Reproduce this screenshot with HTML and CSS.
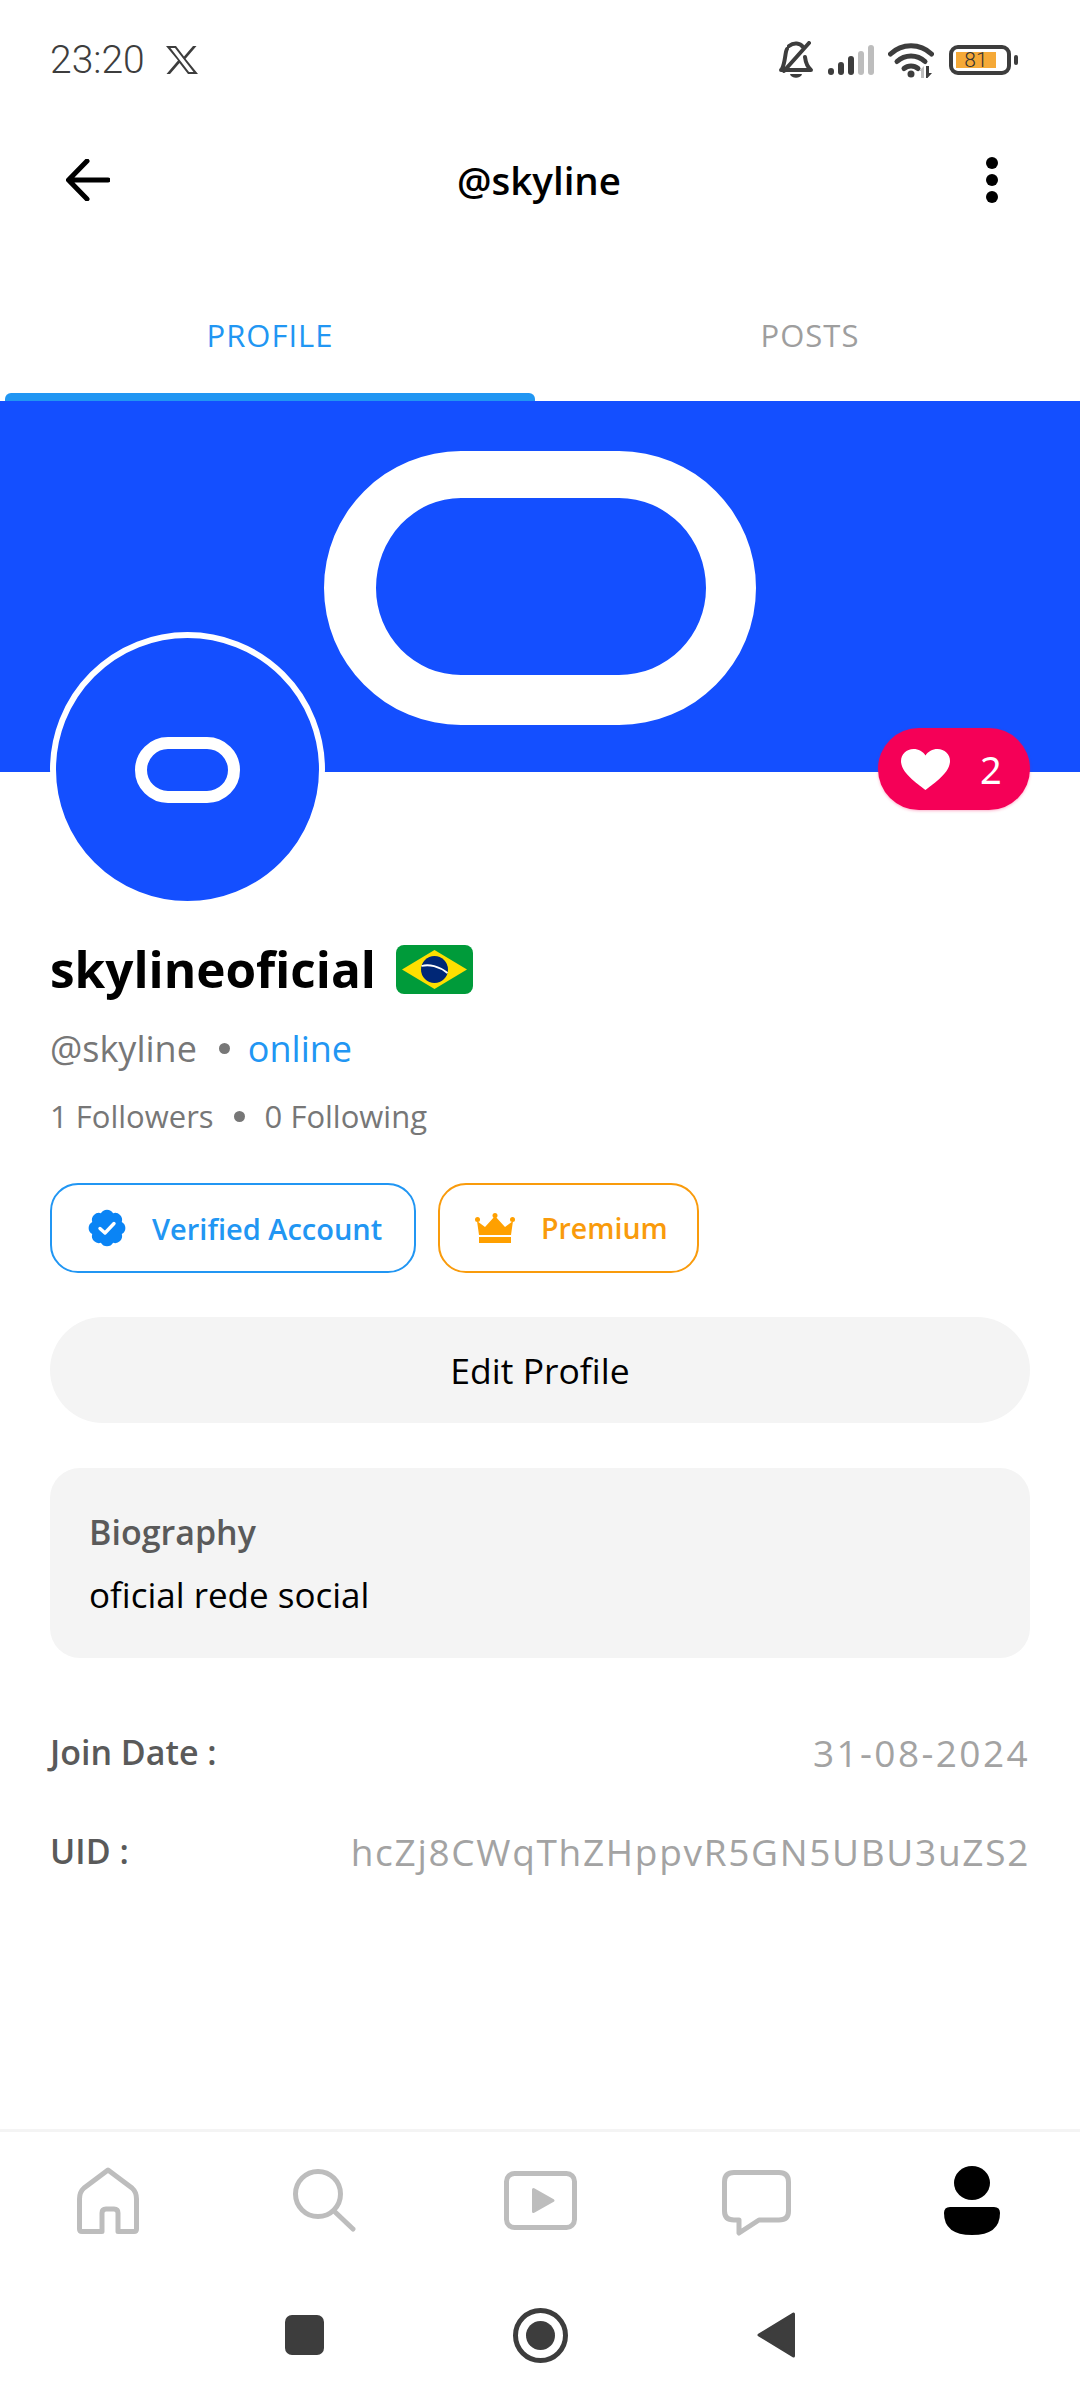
FILE: index.html
```html
<!DOCTYPE html>
<html lang="en">
<head>
<meta charset="utf-8">
<title>@skyline</title>
<link rel="stylesheet" href="styles.css">
</head>
<body>
<div class="screen">
  <div class="status">
    <div class="status-left">
      <span class="clock">23:20</span>
      <svg class="x-logo" viewBox="0 0 32 28"><path fill="#3d3d3d" fill-rule="evenodd" d="M0 0H10L18 10.500 27 0H30.500L19.600 12.800 32 28H22L13.500 17 4 28H.5L12 14.500ZM4.500 2 23 26H27.500L9 2Z"/></svg>
    </div>
    <div class="status-right">
      <svg class="i-bell" viewBox="0 0 34 38"><path fill="none" stroke="#3d3d3d" stroke-width="4" stroke-linecap="round" stroke-linejoin="round" d="M2 29H32C27 25 26.500 20 26 16 M8 8C6 11 6.500 21 3 28 M10 5C15 1 21 2 24 6 M30 2 5 30"/><path fill="#3d3d3d" d="M11 33H23C22 38 12 38 11 33Z"/></svg>
      <svg class="i-signal" viewBox="0 0 46 30"><rect x="0" y="23" width="6" height="7" rx="3" fill="#3d3d3d"/><rect x="10" y="17" width="6" height="13" rx="3" fill="#3d3d3d"/><rect x="20" y="11" width="6" height="19" rx="3" fill="#3d3d3d"/><rect x="30" y="6" width="6" height="24" rx="3" fill="#bdbdbd"/><rect x="40" y="0" width="6" height="30" rx="3" fill="#bdbdbd"/></svg>
      <svg class="i-wifi" viewBox="0 0 46 35"><g fill="none" stroke="#3d3d3d" stroke-width="5" stroke-linecap="round"><path d="M2.500 11C14 0 32 0 43.500 11"/><path d="M9 18.500C17 11 29 11 37 18.500"/><path d="M16 25.500C20 22 26 22 30 25.500"/></g><circle cx="23" cy="31" r="3.500" fill="#3d3d3d"/><path fill="#bdbdbd" d="M31 28 36 23V35H33V28Z"/><path fill="#3d3d3d" d="M38 23H41V30H44L39.500 35 38 35Z"/></svg>
      <div class="battery"><div class="battery-body"><span class="battery-fill">81</span></div><span class="battery-nub"></span></div>
    </div>
  </div>

  <header class="appbar">
    <svg class="i-back" viewBox="0 0 44 42"><path fill="none" stroke="#000" stroke-width="5" stroke-linecap="round" stroke-linejoin="round" d="M42 21H3M21 2 2.500 21 21 40"/></svg>
    <h1 class="appbar-title">@skyline</h1>
    <div class="more"><i></i><i></i><i></i></div>
  </header>

  <nav class="tabs">
    <div class="tab tab-on"><span>PROFILE</span><b class="tab-bar"></b></div>
    <div class="tab"><span>POSTS</span></div>
  </nav>

  <section class="banner">
    <div class="mark-big"></div>
    <div class="avatar"><div class="mark-small"></div></div>
    <div class="likes">
      <svg class="i-heart" viewBox="0 0 49 41"><path fill="#fff" d="M24.500 41C20 37 0 25 0 12 0 5 5.500 0 12.500 0 17.500 0 22 2.500 24.500 6.500 27 2.500 31.500 0 36.500 0 43.500 0 49 5 49 12 49 25 29 37 24.500 41Z"/></svg>
      <span>2</span>
    </div>
  </section>

  <main class="content">
    <div class="name-row">
      <h2 class="name">skylineoficial</h2>
      <svg class="flag" viewBox="0 0 77 49"><rect width="77" height="49" rx="8" fill="#009b3a"/><path fill="#fedf00" d="M38.500 5 71 24.500 38.500 44 6 24.500Z"/><circle cx="38.500" cy="24.500" r="13.500" fill="#002776"/><path fill="none" stroke="#fff" stroke-width="1.800" d="M25.500 21C33 19 43 21 51.500 28"/></svg>
    </div>
    <div class="meta-row handle-row"><span>@skyline</span><i class="dot"></i><span class="online">online</span></div>
    <div class="meta-row follow-row"><span>1 Followers</span><i class="dot"></i><span>0 Following</span></div>
    <div class="chips">
      <div class="chip chip-blue">
        <svg class="i-badge" viewBox="0 0 38 38"><path fill="#0a84f5" d="M33.800 25.100A7 7 0 0 1 25.100 33.800 7 7 0 0 1 12.900 33.800 7 7 0 0 1 4.200 25.100 7 7 0 0 1 4.200 12.900 7 7 0 0 1 12.900 4.200 7 7 0 0 1 25.100 4.200 7 7 0 0 1 33.800 12.900 7 7 0 0 1 33.800 25.100Z"/><path fill="none" stroke="#fff" stroke-width="3.400" stroke-linecap="round" stroke-linejoin="round" d="M12 19.500 17 24 26 14.500"/></svg>
        <span>Verified Account</span>
      </div>
      <div class="chip chip-gold">
        <svg class="i-crown" viewBox="0 0 40 30"><path fill="#ffa000" d="M4 22 2 8 10 14 20 3 30 14 38 8 36 22Z"/><circle cx="2.500" cy="6.500" r="2.500" fill="#ffa000"/><circle cx="20" cy="2.500" r="2.500" fill="#ffa000"/><circle cx="37.500" cy="6.500" r="2.500" fill="#ffa000"/><rect x="4" y="24" width="32" height="6" fill="#ffa000"/></svg>
        <span>Premium</span>
      </div>
    </div>
    <div class="edit">Edit Profile</div>
    <div class="bio">
      <div class="bio-title">Biography</div>
      <div class="bio-text">oficial rede social</div>
    </div>
    <div class="info-row info-join"><span class="info-key">Join Date :</span><span class="info-val info-date">31-08-2024</span></div>
    <div class="info-row info-uid"><span class="info-key">UID :</span><span class="info-val">hcZj8CWqThZHppvR5GN5UBU3uZS2</span></div>
  </main>

  <nav class="bottom">
    <div class="bottom-item"><svg class="i-home" viewBox="0 0 62 67"><path fill="none" stroke="#bdbdbd" stroke-width="5" stroke-linejoin="round" d="M31 3 55 21Q59.500 25 59.500 32V62Q59.500 64.500 57 64.500H41V46Q41 42 37 42H29Q25 42 25 46V64.500H5Q2.500 64.500 2.500 62V32Q2.500 25 7 21Z"/></svg></div>
    <div class="bottom-item"><svg class="i-search" viewBox="0 0 63 63"><circle cx="25" cy="25" r="22.500" fill="none" stroke="#bdbdbd" stroke-width="5"/><path stroke="#bdbdbd" stroke-width="5" stroke-linecap="round" d="M41 42 60 60"/></svg></div>
    <div class="bottom-item"><svg class="i-video" viewBox="0 0 73 59"><rect x="2.500" y="2.500" width="68" height="54" rx="8" fill="none" stroke="#bdbdbd" stroke-width="5"/><path fill="#bdbdbd" stroke="#bdbdbd" stroke-width="3" stroke-linejoin="round" d="M29.500 18.500 49 29.500 29.500 40.500Z"/></svg></div>
    <div class="bottom-item"><svg class="i-chat" viewBox="0 0 69 66"><path fill="none" stroke="#bdbdbd" stroke-width="5" stroke-linejoin="round" d="M12 2.500H57Q66.500 2.500 66.500 12V41Q66.500 50 57 50H37L17 63V50H12Q2.500 50 2.500 41V12Q2.500 2.500 12 2.500Z"/></svg></div>
    <div class="bottom-item"><svg class="i-user" viewBox="0 0 56 69"><ellipse cx="28" cy="17" rx="18" ry="17"/><path d="M6 41H50Q56 41 56 47 56 69 28 69 0 69 0 47 0 41 6 41Z"/></svg></div>
  </nav>

  <div class="sysnav">
    <div class="sys-item"><span class="sys-square"></span></div>
    <div class="sys-item"><span class="sys-circle"><i></i></span></div>
    <div class="sys-item"><svg class="i-tri" viewBox="0 0 38 46"><path fill="#3d3d3d" stroke="#3d3d3d" stroke-width="3" stroke-linejoin="round" d="M36.500 2V44L2 23Z"/></svg></div>
  </div>
</div>
</body>
</html>
```

FILE: styles.css
```css
* { box-sizing: border-box; }
html, body { margin: 0; padding: 0; background: #fff; }
body { font-family: "Open Sans", "Noto Sans", sans-serif; color: #000; }
svg { display: block; flex: none; }
.screen { width: 1080px; height: 2400px; display: flex; flex-direction: column; overflow: hidden; background: #fff; }

.status { height: 120px; padding: 0 62px 0 50px; display: flex; align-items: center; justify-content: space-between; }
.status-left { display: flex; align-items: center; gap: 21px; }
.clock { font: 300 39px "Roboto", sans-serif; color: #3d3d3d; }
.x-logo { width: 32px; height: 28px; }
.status-right { display: flex; align-items: center; }
.i-bell { width: 34px; height: 38px; margin-right: 15px; }
.i-signal { width: 46px; height: 30px; margin-right: 14px; }
.i-wifi { width: 46px; height: 35px; margin-right: 15px; }
.battery { display: flex; align-items: center; gap: 3px; }
.battery-body { width: 62px; height: 30px; border: 4px solid #3d3d3d; border-radius: 9px; padding: 3px; }
.battery-fill { display: block; height: 16px; width: 40px; background: #f5a937; font: 300 21px/16px "Roboto", sans-serif; color: #333; text-align: center; }
.battery-nub { width: 4px; height: 10px; border-radius: 2px; background: #3d3d3d; }

.appbar { height: 120px; padding: 0 82px 0 66px; display: flex; align-items: center; justify-content: space-between; }
.i-back { width: 44px; height: 42px; }
.appbar-title { margin: 0 0 0 -18px; font-size: 38.500px; font-weight: 600; }
.more { display: flex; flex-direction: column; gap: 5px; }
.more i { width: 12px; height: 12px; border-radius: 50%; background: #000; }

.tabs { height: 161px; display: grid; grid-template-columns: 1fr 1fr; }
.tab { display: flex; flex-direction: column; align-items: center; font-size: 31px; letter-spacing: 1px; color: #9e9e9e; padding-top: 77px; }
.tab span { line-height: 36px; }
.tab-on { color: #2196f3; }
.tab-bar { align-self: stretch; height: 8px; margin: 40px 5px 0; background: #2196f3; border-radius: 6px 6px 0 0; }

.banner { position: relative; height: 371px; background: #144fff; display: flex; align-items: center; justify-content: center; }
.mark-big { width: 432px; height: 274px; margin-top: 3px; border-style: solid; border-color: #fff; border-width: 47px 50px 50px 52px; border-radius: 137px; }
.avatar { position: absolute; left: 50px; top: 231px; width: 275px; height: 275px; border: 6px solid #fff; border-radius: 50%; background: #144fff; display: flex; align-items: center; justify-content: center; }
.mark-small { width: 105px; height: 66px; border: 12px solid #fff; border-radius: 33px; }
.likes { position: absolute; left: 878px; top: 327px; width: 152px; height: 82px; border-radius: 41px; background: #f50057; color: #fff; display: flex; align-items: center; padding-left: 23px; gap: 30px; font: 400 38px "Noto Sans", sans-serif; box-shadow: 0 1px 3px rgba(245, 0, 87, .3); }
.i-heart { width: 49px; height: 41px; }

.content { flex: 1; padding: 0 50px; }
.name-row { margin-top: 172px; height: 50px; display: flex; align-items: center; gap: 20px; }
.name { margin: 0; font-size: 49.500px; font-weight: 700; line-height: 50px; }
.flag { width: 77px; height: 49px; }
.meta-row { display: flex; align-items: center; color: #777; }
.handle-row { margin-top: 34px; height: 40px; font-size: 36px; gap: 22px; }
.follow-row { margin-top: 30px; height: 36px; font-size: 31px; gap: 20px; }
.dot { width: 11px; height: 11px; border-radius: 50%; background: #777; }
.online { color: #2196f3; margin-left: -4px; }
.chips { margin-top: 49px; display: flex; gap: 22px; }
.chip { height: 90px; border: 2px solid; border-radius: 28px; display: flex; align-items: center; font-weight: 600; }
.chip-blue { width: 366px; padding-left: 36px; gap: 26px; font-size: 29px; color: #2196f3; border-color: #2196f3; }
.chip-gold { width: 261px; padding-left: 35px; gap: 26px; font-size: 28.500px; color: #f99b0c; border-color: #f99b0c; }
.i-badge { width: 38px; height: 38px; }
.i-crown { width: 40px; height: 30px; }
.edit { margin-top: 44px; height: 106px; border-radius: 53px; background: #f4f4f4; display: flex; align-items: center; justify-content: center; font-size: 35.500px; }
.bio { margin-top: 45px; height: 190px; border-radius: 30px; background: #f4f4f4; padding: 44px 39px 0; }
.bio-title { font-size: 34px; font-weight: 600; color: #5a5a5a; line-height: 40px; }
.bio-text { margin-top: 23px; font-size: 35px; line-height: 40px; }
.info-row { height: 40px; display: flex; align-items: center; justify-content: space-between; }
.info-join { margin-top: 74px; }
.info-uid { margin-top: 59px; }
.info-key { font-size: 34px; font-weight: 600; color: #5a5a5a; }
.info-val { font-size: 37px; letter-spacing: 1.700px; color: #a3a3a3; }
.info-date { letter-spacing: 2.400px; }

.bottom { height: 146px; border-top: 3px solid #f4f4f4; display: grid; grid-template-columns: repeat(5, 1fr); align-items: center; padding-bottom: 6px; }
.bottom-item { display: flex; justify-content: center; }
.i-home { width: 62px; height: 67px; }
.i-search { width: 63px; height: 63px; }
.i-video { width: 73px; height: 59px; }
.i-chat { width: 69px; height: 66px; margin-top: 5px; }
.i-user { width: 56px; height: 69px; }

.sysnav { height: 125px; padding: 0 186px 5px; display: grid; grid-template-columns: repeat(3, 1fr); align-items: center; }
.sys-item { display: flex; justify-content: center; }
.sys-square { width: 39px; height: 40px; border-radius: 7px; background: #3d3d3d; }
.sys-circle { width: 55px; height: 55px; border: 5px solid #3d3d3d; border-radius: 50%; display: flex; align-items: center; justify-content: center; }
.sys-circle i { width: 29px; height: 29px; border-radius: 50%; background: #3d3d3d; }
.i-tri { width: 38px; height: 46px; }
```
